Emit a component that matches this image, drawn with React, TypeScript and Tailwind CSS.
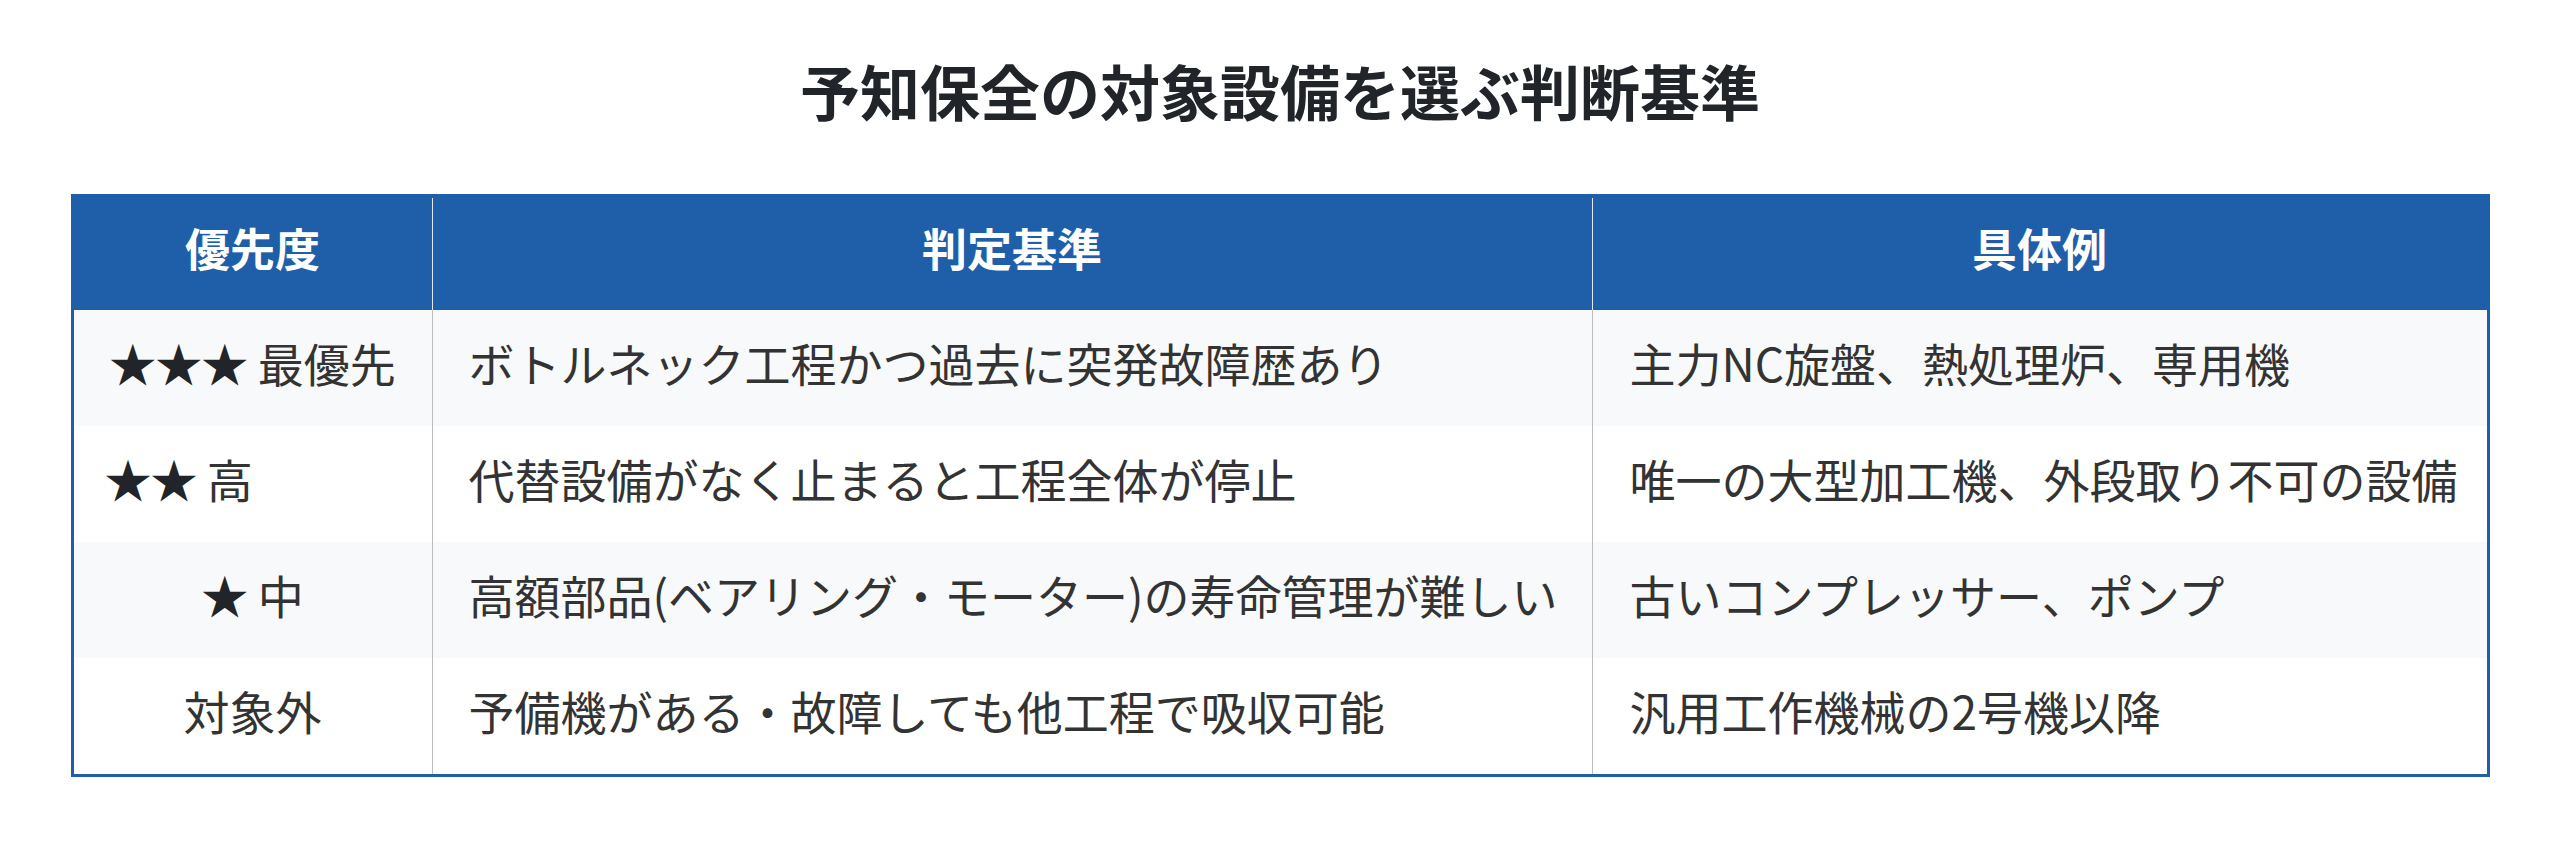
import React from "react";

const rows = [
  { s: "★★★", p: "最優先", c: "ボトルネック工程かつ過去に突発故障歴あり", e: "主力NC旋盤、熱処理炉、専用機", bg: "bg-[#f8f9fa]", left: false },
  { s: "★★", p: "高", c: "代替設備がなく止まると工程全体が停止", e: "唯一の大型加工機、外段取り不可の設備", bg: "bg-white", left: true },
  { s: "★", p: "中", c: "高額部品(ベアリング・モーター)の寿命管理が難しい", e: "古いコンプレッサー、ポンプ", bg: "bg-[#f8f9fa]", left: false },
  { s: "", p: "対象外", c: "予備機がある・故障しても他工程で吸収可能", e: "汎用工作機械の2号機以降", bg: "bg-white", left: false },
];

export default function App() {
  return (
    <div
      className="w-[2560px] h-[848px] bg-white"
      style={{ fontFamily: '"Noto Sans CJK JP", "Noto Sans", sans-serif' }}
    >
      <h1 className="pt-[45px] h-[135px] text-center text-[60px] leading-[90px] font-bold text-[#212529]">
        予知保全の対象設備を選ぶ判断基準
      </h1>
      <div className="mt-[59px] mx-auto w-[2419px] border-[3px] border-[#1f5ea8]">
        <div className="grid grid-cols-[359px_1160px_1fr] h-[113px] bg-[#1f5ea8] text-white text-[45px] font-bold">
          <div className="flex items-center justify-center pb-[12px] border-r border-[#e3e9f2] mt-[1px]">優先度</div>
          <div className="flex items-center justify-center pb-[12px] border-r border-[#e3e9f2] mt-[1px]">判定基準</div>
          <div className="flex items-center justify-center pb-[12px]">具体例</div>
        </div>
        {rows.map((r, i) => (
          <div key={i} className={`grid grid-cols-[359px_1160px_1fr] h-[116px] ${r.bg} text-[#333333] text-[46px]`}>
            <div
              className={`flex items-center pb-[12px] border-r border-[#bdbdbd] whitespace-nowrap ${
                r.left ? "justify-start pl-[31px]" : "justify-center"
              }`}
            >
              {r.s ? <span className="text-[#212529] text-[47px] tracking-[-1px]">{r.s}</span> : null}
              {r.s ? <span>&nbsp;</span> : null}
              <span>{r.p}</span>
            </div>
            <div className="flex items-center pb-[12px] pl-[36px] border-r border-[#bdbdbd] whitespace-nowrap">{r.c}</div>
            <div className="flex items-center pb-[12px] pl-[37px] whitespace-nowrap">{r.e}</div>
          </div>
        ))}
      </div>
    </div>
  );
}
